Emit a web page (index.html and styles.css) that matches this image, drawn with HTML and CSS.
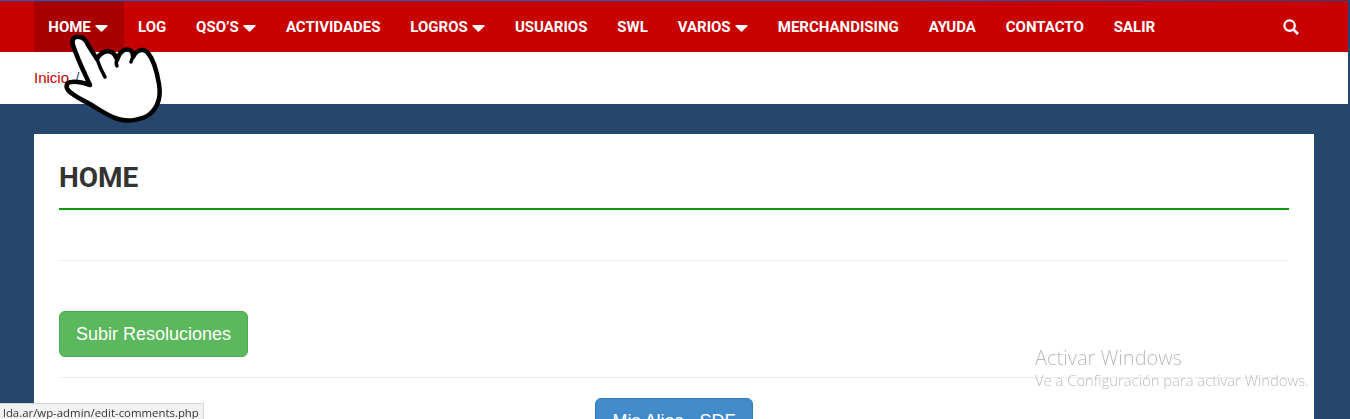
FILE: index.html
```html
<!DOCTYPE html>
<html>
<head>
    <link rel="stylesheet" href="styles.css">
</head>
<body>
    <div class="top-line"></div>
    <div class="site">
        <!-- Main menu -->
        <nav class="menu">
            <a class="menu-item active" href="#">HOME <svg class="caret" viewBox="0 0 13 8"><path d="M1 1h11a.8.8 0 0 1 .5 1.3L7 7.4a.8.8 0 0 1-1.100 0L.5 2.300A.8.8 0 0 1 1 1z"/></svg></a>
            <a class="menu-item" href="#">LOG</a>
            <a class="menu-item" href="#">QSO’S <svg class="caret" viewBox="0 0 13 8"><path d="M1 1h11a.8.8 0 0 1 .5 1.3L7 7.4a.8.8 0 0 1-1.100 0L.5 2.300A.8.8 0 0 1 1 1z"/></svg></a>
            <a class="menu-item" href="#">ACTIVIDADES</a>
            <a class="menu-item" href="#">LOGROS <svg class="caret" viewBox="0 0 13 8"><path d="M1 1h11a.8.8 0 0 1 .5 1.3L7 7.4a.8.8 0 0 1-1.100 0L.5 2.300A.8.8 0 0 1 1 1z"/></svg></a>
            <a class="menu-item" href="#">USUARIOS</a>
            <a class="menu-item" href="#">SWL</a>
            <a class="menu-item" href="#">VARIOS <svg class="caret" viewBox="0 0 13 8"><path d="M1 1h11a.8.8 0 0 1 .5 1.3L7 7.4a.8.8 0 0 1-1.100 0L.5 2.300A.8.8 0 0 1 1 1z"/></svg></a>
            <a class="menu-item" href="#">MERCHANDISING</a>
            <a class="menu-item" href="#">AYUDA</a>
            <a class="menu-item" href="#">CONTACTO</a>
            <a class="menu-item" href="#">SALIR</a>
            <a class="menu-search" href="#">
                <svg viewBox="0 0 16 16"><circle cx="6.600" cy="6.600" r="5.200" fill="none" stroke="#fff" stroke-width="2.200"/><path d="M10.500 10.500L15 15" stroke="#fff" stroke-width="2.600"/></svg>
            </a>
        </nav>
        <!-- Breadcrumb -->
        <div class="breadcrumb"><a href="#">Inicio</a> <span class="sep">/</span></div>
        <!-- Content -->
        <main class="content">
            <div class="card">
                <h1 class="page-title">HOME</h1>
                <hr class="rule first">
                <a class="btn btn-green" href="#">Subir Resoluciones</a>
                <hr class="rule second">
                <div class="center"><a class="btn btn-blue" href="#">Mis Alias - SDF</a></div>
            </div>
        </main>
    </div>
    <!-- Hand cursor over the menu -->
    <svg class="hand" viewBox="60 30 110 100">
        <path d="M73 45C71 39 75 36 79 37C83 37 86 40 88 45L97 59C100 53 106 50 111 52C114 53 116 56 117 60C120 51 125 48 130 50C132 51 133 54 133 57C137 49 144 48 148 53C153 59 157 72 159 84C161 96 158 107 150 114C142 120 128 122 118 119C108 116 100 110 90 104C82 100 72 95 68 90C65 86 67 82 72 82C78 81 84 83 90 85C84 72 77 58 73 45Z" fill="#fff" stroke="#000" stroke-width="4.500" stroke-linejoin="round"/>
        <path d="M97 59C99 65 102 72 105 77M117 60C116 62 116 64 117 66M133 57C132 59 131 61 131 62" fill="none" stroke="#000" stroke-width="3.500" stroke-linecap="round"/>
    </svg>
    <!-- Browser and system overlays -->
    <div class="status-url">lda.ar/wp-admin/edit-comments.php</div>
    <div class="activate">
        <div class="activate-title">Activar Windows</div>
        <div class="activate-text">Ve a Configuración para activar Windows.</div>
    </div>
</body>
</html>
```

FILE: styles.css
```css
html, body {
    margin: 0;
    height: 100%;
}
body {
    height: 419px;
    overflow: hidden;
    background: #26466d;
    font-family: 'Liberation Sans', Arial, sans-serif;
    font-size: 15px;
    color: #333;
}
a {
    text-decoration: none;
}
.top-line {
    height: 1px;
    background: linear-gradient(to right, #1a5fd0, #1a5fd0 60%, #26466d);
}
.site {
    margin-right: 2px;
}
/* Main menu */
.menu {
    display: flex;
    align-items: stretch;
    height: 51px;
    padding-left: 34px;
    background: #c80000;
}
.menu-item {
    display: flex;
    align-items: center;
    gap: 4.300px;
    padding: 0 15.600px 0 14.300px;
    font-family: Roboto, sans-serif;
    font-weight: 700;
    font-size: 15px;
    color: #fff;
}
.menu-item.active {
    background: #a80000;
}
.caret {
    width: 13px;
    height: 8px;
    margin-top: 3px;
    fill: #fff;
}
.menu-search {
    display: flex;
    align-items: center;
    margin-left: auto;
    padding-right: 49px;
}
.menu-search svg {
    width: 16px;
    height: 16px;
}
/* Breadcrumb */
.breadcrumb {
    height: 52px;
    padding-left: 34px;
    line-height: 52px;
    background: #fff;
}
.breadcrumb a {
    color: #c80000;
}
.sep {
    margin-left: 2px;
    color: #33507a;
}
/* Content */
.content {
    padding: 30px 34px 0;
}
.card {
    padding: 0 25px;
    background: #fff;
}
.page-title {
    margin: 0;
    padding: 27px 0 14px;
    border-bottom: 2px solid #0a9a0a;
    font-family: Roboto, sans-serif;
    font-weight: 700;
    font-size: 28px;
    line-height: 33px;
    color: #333;
}
.rule {
    height: 1px;
    margin: 0;
    border: 0;
    background: #eee;
}
.rule.first {
    margin: 50px 0;
}
.rule.second {
    margin: 20px 0;
}
.btn {
    display: inline-block;
    box-sizing: border-box;
    padding: 10px 16px;
    border: 1px solid;
    border-radius: 6px;
    font-size: 18px;
    line-height: 24px;
    color: #fff;
}
.btn-green {
    background: #5cb85c;
    border-color: #4cae4c;
}
.btn-blue {
    padding: 10px 16.700px;
    background: #428bca;
    border-color: #357ebd;
}
.center {
    text-align: center;
}
/* Hand cursor */
.hand {
    position: fixed;
    left: 60px;
    top: 30px;
    width: 110px;
    height: 100px;
}
/* Overlays */
.status-url {
    position: fixed;
    left: 0;
    bottom: 0;
    height: 15px;
    padding: 0 4px 0 3px;
    border: 1px solid #d4d4d4;
    border-width: 1px 1px 0 0;
    background: #f2f2f2;
    font-family: 'Open Sans', sans-serif;
    font-size: 11.400px;
    line-height: 17px;
    color: #333;
}
.activate {
    position: fixed;
    left: 1035px;
    top: 346px;
    font-family: 'Open Sans', sans-serif;
    font-weight: 300;
    color: #bcbcbc;
}
.activate-title {
    font-size: 20px;
    line-height: 24px;
}
.activate-text {
    font-size: 14.800px;
    line-height: 20px;
}
```
